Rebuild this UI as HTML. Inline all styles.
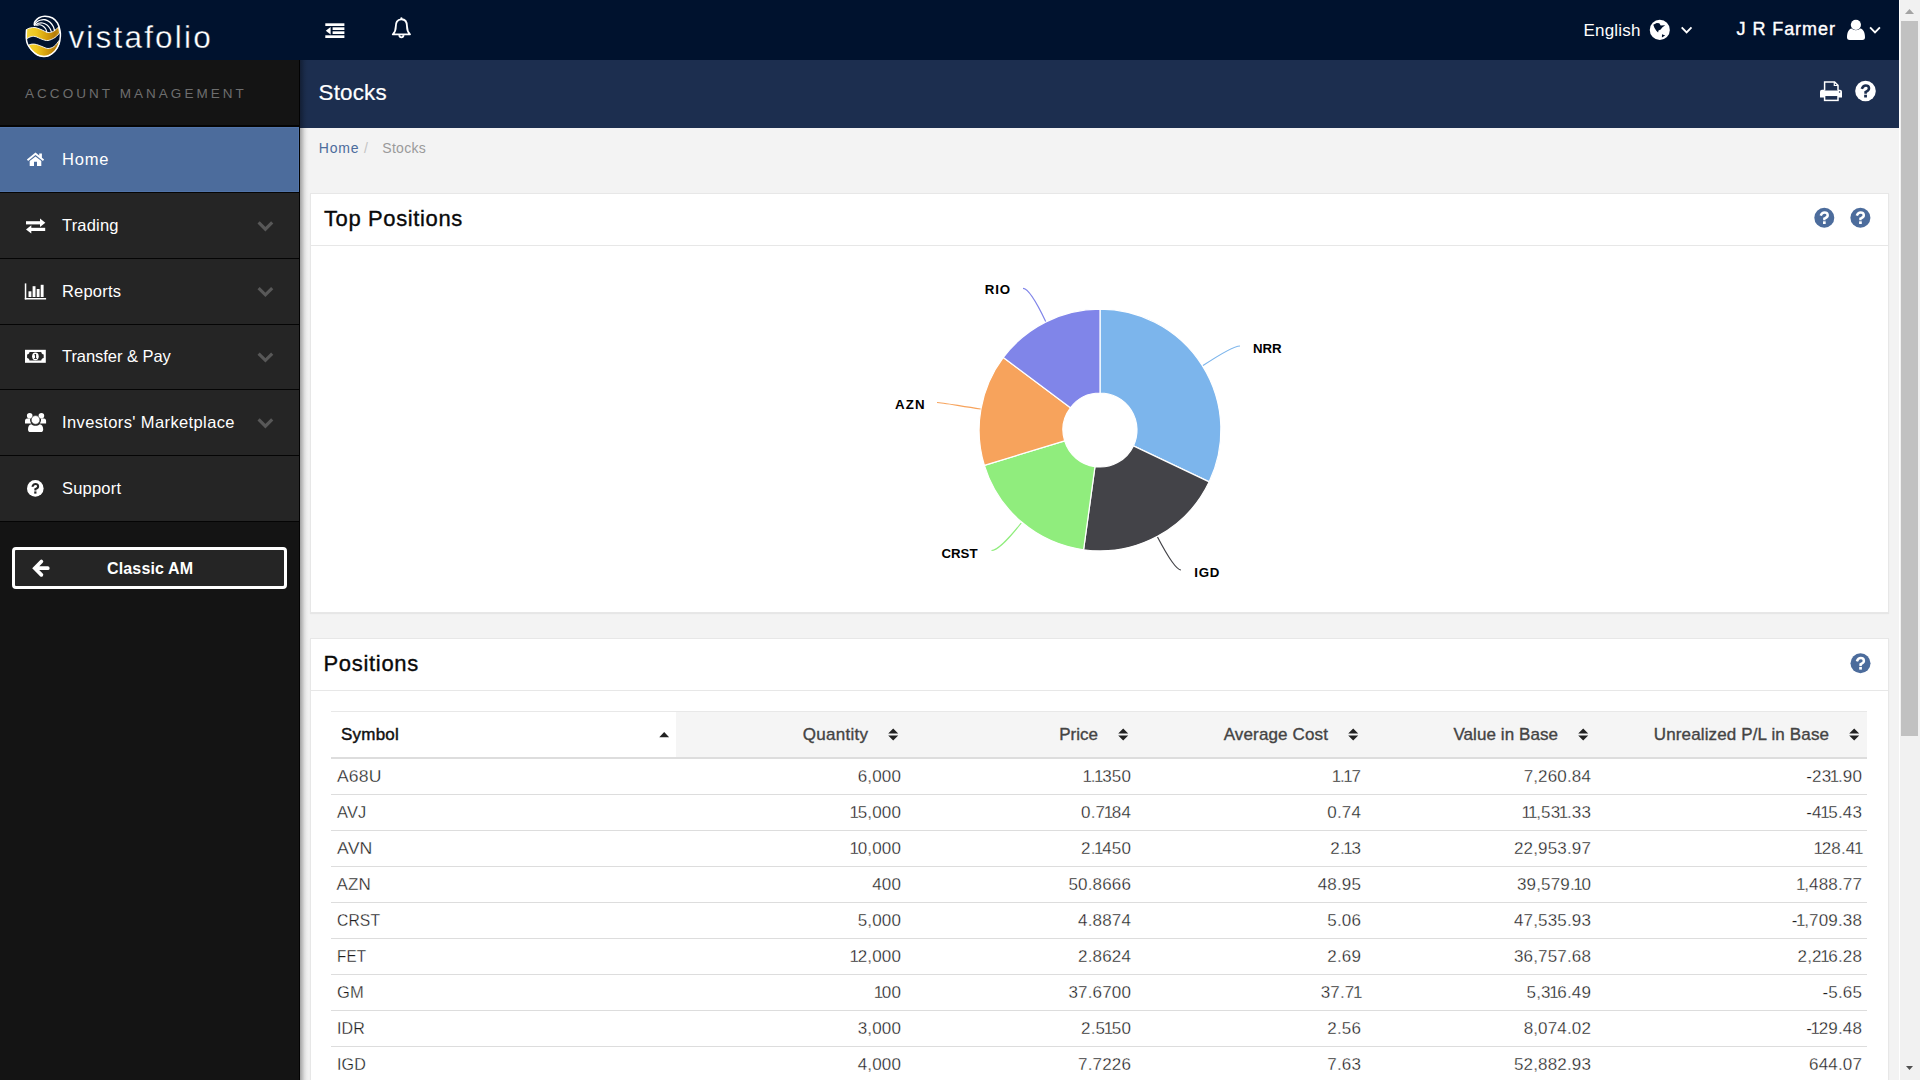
<!DOCTYPE html>
<html lang="en">
<head>
<meta charset="utf-8">
<title>Stocks</title>
<style>
*{box-sizing:border-box;margin:0;padding:0}
html,body{width:1920px;height:1080px;overflow:hidden;background:#f3f3f3;font-family:"Liberation Sans",sans-serif;color:#333}
.abs{position:absolute}
.t{position:absolute;white-space:nowrap;line-height:1}
#top{position:absolute;left:0;top:0;width:1899px;height:60px;background:#00122e}
#titlebar{position:absolute;left:300px;top:60px;width:1599px;height:68px;background:#1c2e4f}
#side{position:absolute;left:0;top:60px;width:300px;height:1020px;background:#141414;border-right:1px solid #030303}
#sshadow{position:absolute;left:300px;top:60px;width:9px;height:1020px;background:linear-gradient(to right,rgba(0,0,0,.33),rgba(0,0,0,.21) 25%,rgba(0,0,0,.09) 50%,rgba(0,0,0,.025) 75%,rgba(0,0,0,0))}
.item{position:absolute;left:0;width:299px;height:65px;background:#252525}
.item.active{background:#4c6c9c;border:1px solid #5174a9;border-left:0}
.sep{position:absolute;left:0;width:299px;height:2px;background:#050505;z-index:2}
.mi{position:absolute;left:62px;font-size:16.5px;color:#fff;white-space:nowrap;line-height:1;letter-spacing:.2px}
.panel{position:absolute;left:310px;width:1579px;background:#fff;border:1px solid #e7e7e7;box-shadow:0 1px 1px rgba(0,0,0,.05)}
.phead{position:absolute;left:0;top:0;width:100%;height:52px;border-bottom:1px solid #e7e7e7}
.ptitle{position:absolute;left:13px;top:14px;font-size:22px;line-height:1;color:#0a0a0a;letter-spacing:.35px;-webkit-text-stroke:.35px #0a0a0a;white-space:nowrap}
#scroll{position:absolute;left:1899px;top:0;width:21px;height:1080px;background:#f1f1f1;border-left:1px solid #fff}
#thumb{position:absolute;left:1px;top:21px;width:17px;height:715px;background:#c1c1c1}
.th{font-size:17px;color:#444;-webkit-text-stroke:.35px #444}
.td{font-size:17px;color:#1c1c1c;-webkit-text-stroke:.28px #fff;letter-spacing:.15px}
.td i{font-style:normal;margin:0 -1.5px}
</style>
</head>
<body>
<div id="top">
<svg class="abs" style="left:0;top:0" width="320" height="60" viewBox="0 0 320 60">
<defs><linearGradient id="gold" gradientUnits="userSpaceOnUse" x1="26" y1="0" x2="60" y2="0"><stop offset="0" stop-color="#f2d43a"/><stop offset=".3" stop-color="#efc81f"/><stop offset=".62" stop-color="#d39c0d"/><stop offset=".85" stop-color="#b57c08"/><stop offset="1" stop-color="#c99a1c"/></linearGradient></defs>
<path d="M26.50 29.50 C27.08 29.25 28.58 28.33 30.00 28.00 C31.42 27.67 33.17 27.25 35.00 27.50 C36.83 27.75 38.83 28.67 41.00 29.50 C43.17 30.33 45.92 32.21 48.00 32.50 C50.08 32.79 51.73 32.17 53.50 31.25 C55.27 30.33 57.75 27.71 58.60 27.00 L59.60 33.00 C58.83 33.75 56.93 36.25 55.00 37.50 C53.07 38.75 50.17 40.21 48.00 40.50 C45.83 40.79 44.17 39.92 42.00 39.25 C39.83 38.58 37.00 36.88 35.00 36.50 C33.00 36.12 31.42 36.58 30.00 37.00 C28.58 37.42 27.08 38.67 26.50 39.00 Z" fill="url(#gold)" stroke="#fff" stroke-width=".9" stroke-linejoin="round"/>
<path d="M28.25 45.25 C28.88 45.06 30.62 44.23 32.00 44.10 C33.38 43.98 34.83 44.10 36.50 44.50 C38.17 44.90 40.08 45.83 42.00 46.50 C43.92 47.17 46.00 48.50 48.00 48.50 C50.00 48.50 52.15 47.83 54.00 46.50 C55.85 45.17 58.25 41.50 59.10 40.50 C59.02 41.25 59.28 43.25 58.60 45.00 C57.92 46.75 56.60 49.25 55.00 51.00 C53.40 52.75 50.92 54.60 49.00 55.50 C47.08 56.40 45.42 56.50 43.50 56.40 C41.58 56.30 39.48 55.97 37.50 54.90 C35.52 53.83 33.14 51.61 31.60 50.00 C30.06 48.39 28.81 46.04 28.25 45.25 Z" fill="url(#gold)" stroke="#fff" stroke-width=".9" stroke-linejoin="round"/>
<g fill="none" stroke="#fff" stroke-linecap="round">
<path d="M34.25 24.75 C34.38 24.21 34.21 22.67 35.00 21.50 C35.79 20.33 37.33 18.62 39.00 17.75 C40.67 16.88 42.75 16.21 45.00 16.25 C47.25 16.29 50.42 16.88 52.50 18.00 C54.58 19.12 56.25 20.92 57.50 23.00 C58.75 25.08 59.52 28.33 60.00 30.50 C60.48 32.67 60.57 33.75 60.40 36.00 C60.23 38.25 59.90 41.50 59.00 44.00 C58.10 46.50 56.67 49.08 55.00 51.00 C53.33 52.92 50.92 54.58 49.00 55.50 C47.08 56.42 45.42 56.58 43.50 56.50 C41.58 56.42 39.50 56.08 37.50 55.00 C35.50 53.92 33.17 51.83 31.50 50.00 C29.83 48.17 28.38 46.00 27.50 44.00 C26.62 42.00 26.42 40.33 26.25 38.00 C26.08 35.67 26.46 31.33 26.50 30.00" stroke-width="1.5"/>
<path d="M34.50 25.25 C34.83 24.75 35.58 23.08 36.50 22.25 C37.42 21.42 38.58 20.67 40.00 20.25 C41.42 19.83 43.33 19.42 45.00 19.75 C46.67 20.08 48.62 21.12 50.00 22.25 C51.38 23.38 52.50 25.12 53.25 26.50 C54.00 27.88 54.29 29.83 54.50 30.50" stroke-width="1.3"/>
<path d="M35.50 25.00 C36.00 24.71 37.33 23.58 38.50 23.25 C39.67 22.92 41.08 22.71 42.50 23.00 C43.92 23.29 45.75 24.08 47.00 25.00 C48.25 25.92 49.29 27.42 50.00 28.50 C50.71 29.58 51.04 31.00 51.25 31.50" stroke-width="1.2"/>
<path d="M36.50 25.25 C37.08 25.17 38.88 24.58 40.00 24.75 C41.12 24.92 42.29 25.54 43.25 26.25 C44.21 26.96 45.17 28.04 45.75 29.00 C46.33 29.96 46.58 31.50 46.75 32.00" stroke-width="1.1"/>
</g>
</svg>
<div class="t" style="left:68.4px;top:21.7px;font-size:31.5px;color:#fff;letter-spacing:2.2px;-webkit-text-stroke:.35px #00122e">vistafolio</div>
<div class="t" style="left:1583.5px;top:21.6px;font-size:17px;color:#fff;letter-spacing:.2px">English</div>
<div class="t" style="left:1736.6px;top:19.8px;font-size:18px;color:#fff;letter-spacing:.92px;-webkit-text-stroke:.4px #fff">J R Farmer</div>
</div>
<div id="titlebar">
<div class="t" style="left:18.6px;top:21.6px;font-size:22.4px;color:#fff;letter-spacing:.18px;-webkit-text-stroke:.2px #fff">Stocks</div>
</div>
<div class="t" style="left:318.8px;top:141px;font-size:14px;color:#4c6c9c;letter-spacing:.8px">Home</div>
<div class="t" style="left:364px;top:141px;font-size:14px;color:#c4c4c4">/</div>
<div class="t" style="left:382.3px;top:141px;font-size:14px;color:#9a9a9a;letter-spacing:.3px">Stocks</div>
<div class="panel" style="top:193px;height:420px"><div class="phead"><div class="ptitle" style="letter-spacing:.62px">Top Positions</div></div></div>
<svg id="chart" class="abs" style="left:860px;top:260px" width="500" height="340" viewBox="860 260 500 340">
<path d="M1100.00 309.10 A120.9 120.9 0 0 1 1209.21 481.86 L1133.42 445.87 A37 37 0 0 0 1100.00 393.00 Z" fill="#7cb5ec" stroke="#fff" stroke-width="1.2" stroke-linejoin="round"/>
<path d="M1209.21 481.86 A120.9 120.9 0 0 1 1083.59 549.78 L1094.98 466.66 A37 37 0 0 0 1133.42 445.87 Z" fill="#434348" stroke="#fff" stroke-width="1.2" stroke-linejoin="round"/>
<path d="M1083.59 549.78 A120.9 120.9 0 0 1 984.38 465.35 L1064.62 440.82 A37 37 0 0 0 1094.98 466.66 Z" fill="#90ed7d" stroke="#fff" stroke-width="1.2" stroke-linejoin="round"/>
<path d="M984.38 465.35 A120.9 120.9 0 0 1 1003.32 357.41 L1070.41 407.78 A37 37 0 0 0 1064.62 440.82 Z" fill="#f7a35c" stroke="#fff" stroke-width="1.2" stroke-linejoin="round"/>
<path d="M1003.32 357.41 A120.9 120.9 0 0 1 1100.00 309.10 L1100.00 393.00 A37 37 0 0 0 1070.41 407.78 Z" fill="#8085e9" stroke="#fff" stroke-width="1.2" stroke-linejoin="round"/>
<g fill="none" stroke-width="1.2">
<path d="M1240 346 C1235 346 1222 353 1203 365.6" stroke="#7cb5ec"/>
<path d="M1181 570 C1176 570 1168 557 1157.5 537" stroke="#434348"/>
<path d="M991.5 550.5 C996.5 550.5 1008 540 1021.2 523" stroke="#90ed7d"/>
<path d="M937 402.5 C942 402.5 960 406 980.6 409" stroke="#f7a35c"/>
<path d="M1023 288.3 C1028 288.3 1036 301 1045.7 321.4" stroke="#8085e9"/>
</g>
<text x="1253.0" y="352.6" textLength="28.6" lengthAdjust="spacing" font-family="Liberation Sans" font-weight="bold" font-size="13.3" fill="#000" stroke="#fff" stroke-width="2" paint-order="stroke" stroke-linejoin="round">NRR</text>
<text x="1194.2" y="577.3" textLength="25.2" lengthAdjust="spacing" font-family="Liberation Sans" font-weight="bold" font-size="13.3" fill="#000" stroke="#fff" stroke-width="2" paint-order="stroke" stroke-linejoin="round">IGD</text>
<text x="941.4" y="558.3" textLength="36.2" lengthAdjust="spacing" font-family="Liberation Sans" font-weight="bold" font-size="13.3" fill="#000" stroke="#fff" stroke-width="2" paint-order="stroke" stroke-linejoin="round">CRST</text>
<text x="894.9" y="409.3" textLength="29.6" lengthAdjust="spacing" font-family="Liberation Sans" font-weight="bold" font-size="13.3" fill="#000" stroke="#fff" stroke-width="2" paint-order="stroke" stroke-linejoin="round">AZN</text>
<text x="984.8" y="294.4" textLength="25.4" lengthAdjust="spacing" font-family="Liberation Sans" font-weight="bold" font-size="13.3" fill="#000" stroke="#fff" stroke-width="2" paint-order="stroke" stroke-linejoin="round">RIO</text>
</svg>
<div class="panel" style="top:638px;height:460px"><div class="phead"><div class="ptitle" style="letter-spacing:.68px;left:12.5px">Positions</div></div></div>
<div class="abs" style="left:331px;top:711px;width:1536px;height:48px;background:#f5f5f5;border-top:1px solid #e8e8e8;border-bottom:2px solid #ddd"></div>
<div class="abs" style="left:331px;top:712px;width:345px;height:45px;background:#fff"></div>
<div class="t th" style="left:341px;top:726px;color:#111;letter-spacing:.22px;-webkit-text-stroke:.45px #111">Symbol</div>
<div class="t th" style="right:1052px;top:726px;letter-spacing:0.28px;margin-right:-0.28px">Quantity</div>
<div class="t th" style="right:822px;top:726px">Price</div>
<div class="t th" style="right:592px;top:726px;letter-spacing:0.15px;margin-right:-0.15px">Average Cost</div>
<div class="t th" style="right:362px;top:726px;letter-spacing:0.08px;margin-right:-0.08px">Value in Base</div>
<div class="t th" style="right:91px;top:726px;letter-spacing:0.14px;margin-right:-0.14px">Unrealized P/L in Base</div>
<div class="abs" style="left:331px;top:794px;width:1536px;height:1px;background:#ddd"></div>
<div class="t td" style="left:336.5px;top:768px;transform-origin:0 50%;transform:scaleX(1.033)">A68U</div>
<div class="t td" style="right:1019px;top:768px">6,000</div>
<div class="t td" style="right:789px;top:768px"><i>1</i>.<i>1</i>350</div>
<div class="t td" style="right:559px;top:768px"><i>1</i>.<i>1</i>7</div>
<div class="t td" style="right:329px;top:768px">7,260.84</div>
<div class="t td" style="right:58px;top:768px">-23<i>1</i>.90</div>
<div class="abs" style="left:331px;top:830px;width:1536px;height:1px;background:#ddd"></div>
<div class="t td" style="left:336.5px;top:804px;transform-origin:0 50%;transform:scaleX(0.966)">AVJ</div>
<div class="t td" style="right:1019px;top:804px"><i>1</i>5,000</div>
<div class="t td" style="right:789px;top:804px">0.7<i>1</i>84</div>
<div class="t td" style="right:559px;top:804px">0.74</div>
<div class="t td" style="right:329px;top:804px"><i>1</i><i>1</i>,53<i>1</i>.33</div>
<div class="t td" style="right:58px;top:804px">-4<i>1</i>5.43</div>
<div class="abs" style="left:331px;top:866px;width:1536px;height:1px;background:#ddd"></div>
<div class="t td" style="left:336.5px;top:840px;transform-origin:0 50%;transform:scaleX(1.04)">AVN</div>
<div class="t td" style="right:1019px;top:840px"><i>1</i>0,000</div>
<div class="t td" style="right:789px;top:840px">2.<i>1</i>450</div>
<div class="t td" style="right:559px;top:840px">2.<i>1</i>3</div>
<div class="t td" style="right:329px;top:840px">22,953.97</div>
<div class="t td" style="right:58px;top:840px"><i>1</i>28.4<i>1</i></div>
<div class="abs" style="left:331px;top:902px;width:1536px;height:1px;background:#ddd"></div>
<div class="t td" style="left:336.5px;top:876px;transform-origin:0 50%;transform:scaleX(1.0)">AZN</div>
<div class="t td" style="right:1019px;top:876px">400</div>
<div class="t td" style="right:789px;top:876px">50.8666</div>
<div class="t td" style="right:559px;top:876px">48.95</div>
<div class="t td" style="right:329px;top:876px">39,579.<i>1</i>0</div>
<div class="t td" style="right:58px;top:876px"><i>1</i>,488.77</div>
<div class="abs" style="left:331px;top:938px;width:1536px;height:1px;background:#ddd"></div>
<div class="t td" style="left:336.5px;top:912px;transform-origin:0 50%;transform:scaleX(0.92)">CRST</div>
<div class="t td" style="right:1019px;top:912px">5,000</div>
<div class="t td" style="right:789px;top:912px">4.8874</div>
<div class="t td" style="right:559px;top:912px">5.06</div>
<div class="t td" style="right:329px;top:912px">47,535.93</div>
<div class="t td" style="right:58px;top:912px">-<i>1</i>,709.38</div>
<div class="abs" style="left:331px;top:974px;width:1536px;height:1px;background:#ddd"></div>
<div class="t td" style="left:336.5px;top:948px;transform-origin:0 50%;transform:scaleX(0.894)">FET</div>
<div class="t td" style="right:1019px;top:948px"><i>1</i>2,000</div>
<div class="t td" style="right:789px;top:948px">2.8624</div>
<div class="t td" style="right:559px;top:948px">2.69</div>
<div class="t td" style="right:329px;top:948px">36,757.68</div>
<div class="t td" style="right:58px;top:948px">2,2<i>1</i>6.28</div>
<div class="abs" style="left:331px;top:1010px;width:1536px;height:1px;background:#ddd"></div>
<div class="t td" style="left:336.5px;top:984px;transform-origin:0 50%;transform:scaleX(0.97)">GM</div>
<div class="t td" style="right:1019px;top:984px"><i>1</i>00</div>
<div class="t td" style="right:789px;top:984px">37.6700</div>
<div class="t td" style="right:559px;top:984px">37.7<i>1</i></div>
<div class="t td" style="right:329px;top:984px">5,3<i>1</i>6.49</div>
<div class="t td" style="right:58px;top:984px">-5.65</div>
<div class="abs" style="left:331px;top:1046px;width:1536px;height:1px;background:#ddd"></div>
<div class="t td" style="left:336.5px;top:1020px;transform-origin:0 50%;transform:scaleX(0.943)">IDR</div>
<div class="t td" style="right:1019px;top:1020px">3,000</div>
<div class="t td" style="right:789px;top:1020px">2.5<i>1</i>50</div>
<div class="t td" style="right:559px;top:1020px">2.56</div>
<div class="t td" style="right:329px;top:1020px">8,074.02</div>
<div class="t td" style="right:58px;top:1020px">-<i>1</i>29.48</div>
<div class="abs" style="left:331px;top:1082px;width:1536px;height:1px;background:#ddd"></div>
<div class="t td" style="left:336.5px;top:1056px;transform-origin:0 50%;transform:scaleX(0.944)">IGD</div>
<div class="t td" style="right:1019px;top:1056px">4,000</div>
<div class="t td" style="right:789px;top:1056px">7.7226</div>
<div class="t td" style="right:559px;top:1056px">7.63</div>
<div class="t td" style="right:329px;top:1056px">52,882.93</div>
<div class="t td" style="right:58px;top:1056px">644.07</div>
<div id="side">
<div class="t" style="left:25px;top:26.5px;font-size:13.5px;color:#6e6e6e;letter-spacing:3.05px">ACCOUNT MANAGEMENT</div>
<div class="sep" style="top:65px;height:2px"></div>
<div class="item active" style="top:67px;height:65px"><div class="mi" style="top:23px;letter-spacing:.8px">Home</div></div>
<div class="sep" style="top:132px;height:1px"></div>
<div class="item" style="top:133px;height:65px"><div class="mi" style="top:24.2px">Trading</div></div>
<div class="sep" style="top:198px;height:1px"></div>
<div class="item" style="top:199px;height:65px"><div class="mi" style="top:24px">Reports</div></div>
<div class="sep" style="top:264px;height:1px"></div>
<div class="item" style="top:265px;height:64px"><div class="mi" style="top:23.2px;letter-spacing:-.05px">Transfer &amp; Pay</div></div>
<div class="sep" style="top:329px;height:1px"></div>
<div class="item" style="top:330px;height:65px"><div class="mi" style="top:23.9px;letter-spacing:.38px">Investors' Marketplace</div></div>
<div class="sep" style="top:395px;height:1px"></div>
<div class="item" style="top:396px;height:65px"><div class="mi" style="top:24.4px">Support</div></div>
<div class="sep" style="top:461px;height:1px"></div>
<div class="abs" style="left:12px;top:487px;width:275px;height:42px;border:3px solid #fff;border-radius:4px;background:#252525"></div>
<div class="t" style="left:107px;top:501px;font-size:16px;font-weight:bold;color:#fff;letter-spacing:.15px">Classic AM</div>
</div>
<div id="sshadow"></div>
<div id="scroll"><div id="thumb"></div></div>
<svg class="abs" style="left:0;top:0;pointer-events:none" width="1920" height="1080" viewBox="0 0 1920 1080">
<g fill="#fff"><rect x="325.3" y="23.3" width="19.1" height="2.7"/><rect x="332.6" y="27.3" width="11.8" height="2.7"/><rect x="332.6" y="31.3" width="11.8" height="2.7"/><rect x="325.3" y="35.3" width="19.1" height="2.7"/><path d="M325.8 30.65 L330.6 26.9 L330.6 34.4 Z"/></g>
<g fill="none" stroke="#fff" stroke-width="1.85" stroke-linejoin="round"><path d="M401.4 19.4 C397 19.2 395.8 23 395.8 26.5 C395.8 30.5 394.6 32.6 392.8 34.3 L410 34.3 C408.2 32.6 407 30.5 407 26.5 C407 23 405.8 19.2 401.4 19.2 Z"/><path d="M399.2 35.2 C399.6 38 403.2 38 403.6 35.2"/></g><circle cx="401.4" cy="18.4" r="1.1" fill="#fff"/>
<circle cx="1659.8" cy="29.9" r="10.05" fill="#fff"/><path d="M1653.3 24.8 L1656.7 23 L1659.3 23.3 L1660.7 25.6 L1665.2 25.2 L1662.2 27.4 L1660.7 29.6 L1658.5 30.4 L1658.1 32.6 L1656.3 30.7 L1654.4 27.8 Z M1662 34.3 L1665.2 35.6 L1661.9 37.6 Z" fill="#00122e"/>
<g fill="none" stroke="#fff" stroke-width="1.9"><path d="M1681.7 27.4 L1686.6 32.3 L1691.5 27.4"/><path d="M1870.1 27.4 L1875 32.3 L1879.9 27.4"/></g>
<g fill="#fff"><circle cx="1855.9" cy="24.8" r="5.1"/><path d="M1847 37.6 C1847 33 1848.4 29.2 1851.6 28.6 C1852.8 29.7 1854.3 30.3 1855.9 30.3 C1857.5 30.3 1859 29.7 1860.2 28.6 C1863.6 29.2 1865 33 1865 37.6 C1865 39.3 1863.8 40.1 1862.4 40.1 L1849.6 40.1 C1848.2 40.1 1847 39.3 1847 37.6 Z"/></g>
<g><path d="M1820 91.8 C1820 90.6 1820.9 89.8 1822 89.8 L1840 89.8 C1841.1 89.8 1842 90.6 1842 91.8 L1842 97.5 L1820 97.5 Z" fill="#fff"/><path d="M1824.6 90.5 L1824.6 81.9 L1834.6 81.9 L1838 85.2 L1838 90.5" fill="#1c2e4f" stroke="#fff" stroke-width="1.5"/><path d="M1834.3 82 L1834.3 85.5 L1838 85.5" fill="none" stroke="#fff" stroke-width="1.2"/><rect x="1824.6" y="95.3" width="13.4" height="5.1" fill="#1c2e4f" stroke="#fff" stroke-width="1.5"/><circle cx="1839.6" cy="92" r=".8" fill="#1c2e4f"/></g>
<circle cx="1865.5" cy="91.0" r="10.3" fill="#fff"/><path d="M1861.79 88.94 C1862.82 86.06 1865.09 85.54 1865.81 85.54 C1869.41 85.54 1870.24 89.66 1866.74 91.31 L1865.60 91.93 L1865.60 93.68" fill="none" stroke="#1c2e4f" stroke-width="2.58" stroke-linecap="butt"/><rect x="1864.16" y="94.71" width="2.78" height="2.78" fill="#1c2e4f"/>
<circle cx="1824.3" cy="217.7" r="10.0" fill="#4c6c9c"/><path d="M1820.70 215.70 C1821.70 212.90 1823.90 212.40 1824.60 212.40 C1828.10 212.40 1828.90 216.40 1825.50 218.00 L1824.40 218.60 L1824.40 220.30" fill="none" stroke="#fff" stroke-width="2.50" stroke-linecap="butt"/><rect x="1823.00" y="221.30" width="2.70" height="2.70" fill="#fff"/>
<circle cx="1860.4" cy="217.7" r="10.0" fill="#4c6c9c"/><path d="M1856.80 215.70 C1857.80 212.90 1860.00 212.40 1860.70 212.40 C1864.20 212.40 1865.00 216.40 1861.60 218.00 L1860.50 218.60 L1860.50 220.30" fill="none" stroke="#fff" stroke-width="2.50" stroke-linecap="butt"/><rect x="1859.10" y="221.30" width="2.70" height="2.70" fill="#fff"/>
<circle cx="1860.5" cy="663.3" r="10.0" fill="#4c6c9c"/><path d="M1856.90 661.30 C1857.90 658.50 1860.10 658.00 1860.80 658.00 C1864.30 658.00 1865.10 662.00 1861.70 663.60 L1860.60 664.20 L1860.60 665.90" fill="none" stroke="#fff" stroke-width="2.50" stroke-linecap="butt"/><rect x="1859.20" y="666.90" width="2.70" height="2.70" fill="#fff"/>
<circle cx="35.3" cy="488.4" r="8.3" fill="#fff"/><path d="M32.31 486.74 C33.14 484.42 34.97 484.00 35.55 484.00 C38.45 484.00 39.12 487.32 36.30 488.65 L35.38 489.15 L35.38 490.56" fill="none" stroke="#252525" stroke-width="2.08" stroke-linecap="butt"/><rect x="34.22" y="491.39" width="2.24" height="2.24" fill="#252525"/>
<g fill="#fff"><path d="M35.5 156.4 L29.7 161.1 L29.7 165.9 L34 165.9 L34 161.8 L37 161.8 L37 165.9 L41.3 165.9 L41.3 161.1 Z"/><path d="M39.2 153.4 L41.9 153.4 L41.9 158.6 L39.2 156.2 Z"/><path d="M27.5 160.2 L35.5 153.8 L43.5 160.2" fill="none" stroke="#fff" stroke-width="1.9"/></g>
<g fill="#fff"><rect x="26" y="221.2" width="15" height="3.2"/><path d="M40 218.6 L45.3 222.8 L40 227 Z"/><rect x="30.2" y="227.8" width="15" height="3.2"/><path d="M31.3 225.2 L26 229.4 L31.3 233.6 Z"/></g>
<g fill="#fff"><rect x="24.8" y="283.4" width="1.5" height="16"/><rect x="24.8" y="298" width="21.3" height="1.5"/><rect x="28.5" y="291.3" width="2.9" height="5.7"/><rect x="32.6" y="286.2" width="2.9" height="10.8"/><rect x="36.7" y="289" width="2.9" height="8"/><rect x="40.7" y="284.8" width="2.9" height="12.2"/></g>
<g><rect x="25" y="349.8" width="20.8" height="13" fill="#fff"/><path d="M29.5 352 L41.3 352 C41.3 353.6 42.5 354.5 43.7 354.5 L43.7 358.1 C42.5 358.1 41.3 359 41.3 360.6 L29.5 360.6 C29.5 359 28.3 358.1 27.1 358.1 L27.1 354.5 C28.3 354.5 29.5 353.6 29.5 352 Z" fill="#252525"/><ellipse cx="35.4" cy="356.3" rx="3.3" ry="3.9" fill="#fff"/><rect x="35" y="354" width="1.1" height="4.2" fill="#252525"/><rect x="34.2" y="358" width="2.6" height=".9" fill="#252525"/><rect x="34.3" y="354.3" width="1" height=".9" fill="#252525"/></g>
<g fill="#fff"><circle cx="29.7" cy="415.7" r="2.8"/><circle cx="41.4" cy="415.7" r="2.8"/><path d="M25 423.5 L25 421 C25 419.6 25.8 418.6 27 418.5 L30.2 418.5 C29.8 420.6 30.4 422.4 31.4 423.5 Z"/><path d="M46.1 423.5 L46.1 421 C46.1 419.6 45.3 418.6 44.1 418.5 L40.9 418.5 C41.3 420.6 40.7 422.4 39.7 423.5 Z"/><circle cx="35.55" cy="419.9" r="4.3" stroke="#252525" stroke-width=".5"/><path d="M28 429.5 C28 426.5 29.2 424.4 31.4 424.2 C32.5 425.2 34 425.8 35.55 425.8 C37.1 425.8 38.6 425.2 39.7 424.2 C41.9 424.4 43.2 426.5 43.2 429.5 C43.2 431.2 42.2 432.1 40.8 432.1 L30.4 432.1 C29 432.1 28 431.2 28 429.5 Z"/></g>
<path d="M258.6 222.4 L265.4 229.2 L272.2 222.4" fill="none" stroke="#585858" stroke-width="3.1"/>
<path d="M258.6 288.1 L265.4 294.9 L272.2 288.1" fill="none" stroke="#585858" stroke-width="3.1"/>
<path d="M258.6 353.6 L265.4 360.4 L272.2 353.6" fill="none" stroke="#585858" stroke-width="3.1"/>
<path d="M258.6 419.4 L265.4 426.2 L272.2 419.4" fill="none" stroke="#585858" stroke-width="3.1"/>
<path d="M47.8 568.2 L36 568.2 M41.4 561.5 L34.8 568.2 L41.4 574.9" fill="none" stroke="#fff" stroke-width="3.7" stroke-linecap="round" stroke-linejoin="miter"/>
<path d="M659.3 737.3 L664.2 731.9 L669.1 737.3 Z" fill="#222"/>
<path d="M888.2 733.4 L893.2 728.6 L898.2 733.4 Z M888.2 735.6 L893.2 740.4 L898.2 735.6 Z" fill="#222"/>
<path d="M1118.2 733.4 L1123.2 728.6 L1128.2 733.4 Z M1118.2 735.6 L1123.2 740.4 L1128.2 735.6 Z" fill="#222"/>
<path d="M1348.2 733.4 L1353.2 728.6 L1358.2 733.4 Z M1348.2 735.6 L1353.2 740.4 L1358.2 735.6 Z" fill="#222"/>
<path d="M1578.2 733.4 L1583.2 728.6 L1588.2 733.4 Z M1578.2 735.6 L1583.2 740.4 L1588.2 735.6 Z" fill="#222"/>
<path d="M1849.2 733.4 L1854.2 728.6 L1859.2 733.4 Z M1849.2 735.6 L1854.2 740.4 L1859.2 735.6 Z" fill="#222"/>
</svg>
<svg class="abs" style="left:1899px;top:0" width="21" height="1080"><path d="M6 14 L10.5 9 L15 14 Z" fill="#a3a3a3"/><path d="M7 1066 L14 1066 L10.5 1070 Z" fill="#505050"/></svg>
</body>
</html>
